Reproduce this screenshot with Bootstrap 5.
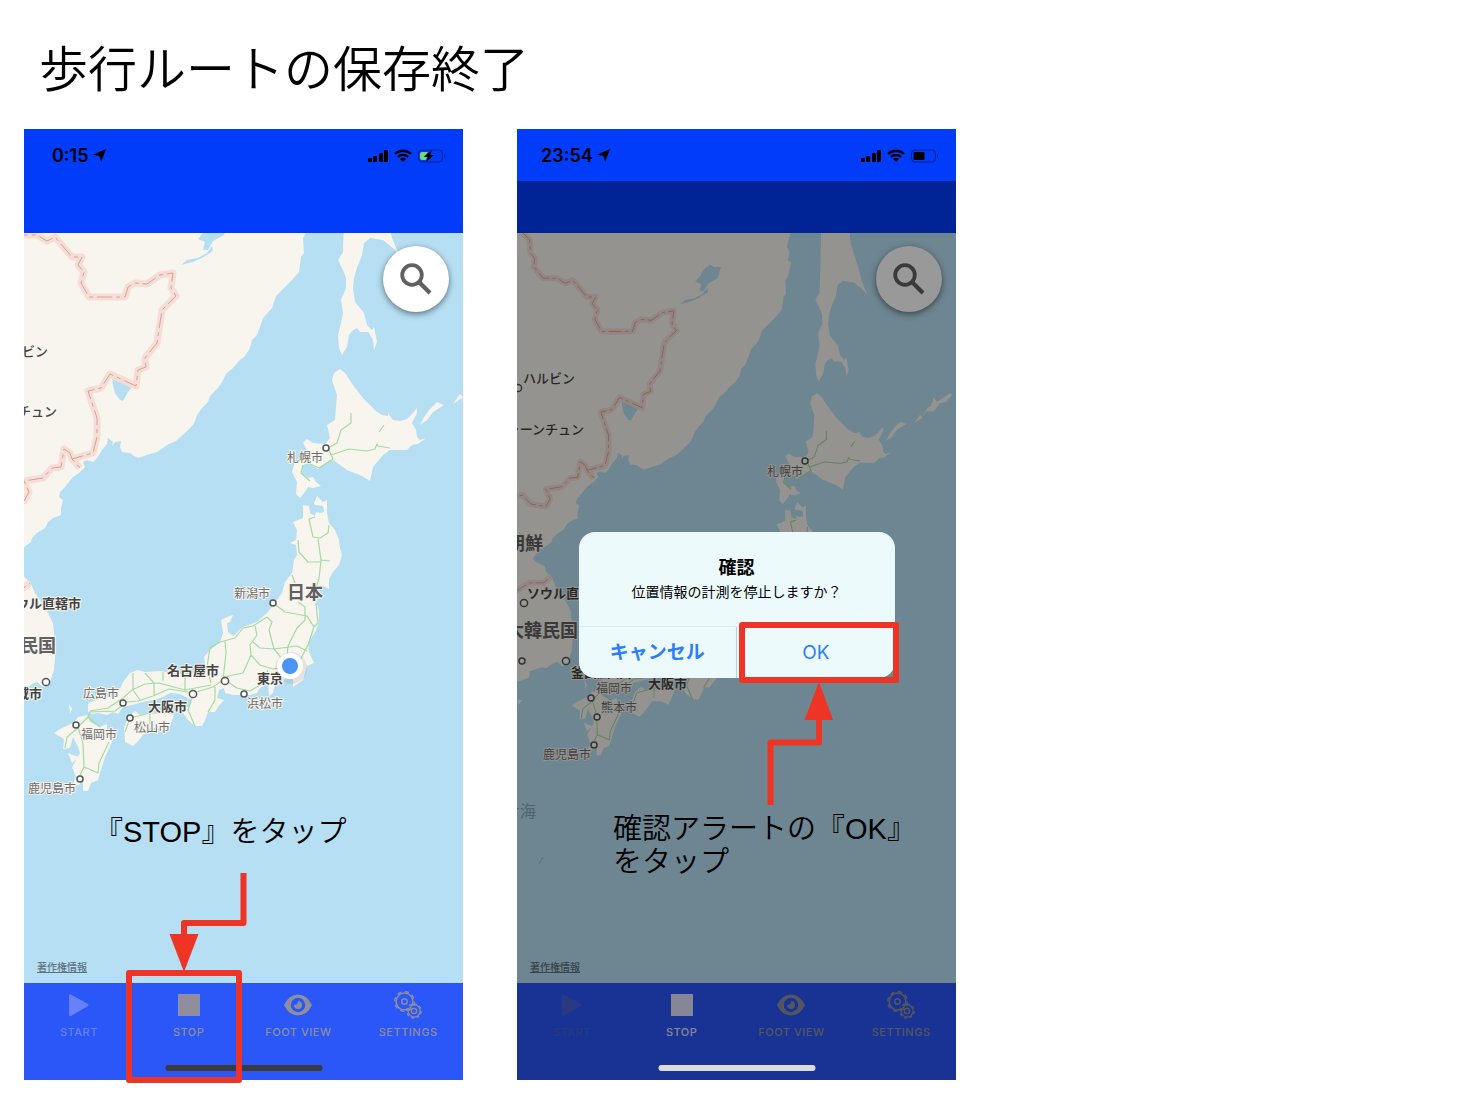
<!DOCTYPE html>
<html lang="ja">
<head>
<meta charset="utf-8">
<meta name="viewport" content="width=device-width, initial-scale=1">
<title>歩行ルートの保存終了</title>
<link href="https://cdn.jsdelivr.net/npm/bootstrap@5.3.0/dist/css/bootstrap.min.css" rel="stylesheet">
<style>
  body { background: #fff; color: #000; font-family: "Liberation Sans", "Noto Sans CJK JP", sans-serif; }
  .slide-title { font-size: 49px; line-height: 56px; font-weight: 350; padding: 42px 15px 31px; }
  .phone-list { gap: 54px; }
  .phone { flex: 0 1 439px; min-width: 0; }
  .status-bar { height: 53px; background: #003cf9; font: 600 18px/20px Inter, sans-serif; }
  .status-bar .arrow-icon { width: 13px; height: 13px; }
  .nav-space { height: 51px; background: #003cf9; }
  .map-svg { width: 100%; height: auto; }
  .map-svg text { font-family: "Noto Sans CJK JP", sans-serif; paint-order: stroke; stroke: #f8f5ef; stroke-width: 2px; stroke-linejoin: round; fill: #444; }
  .map-svg .city { font-size: 12px; fill: #6d6d6d; }
  .map-svg .metro { font-size: 13px; font-weight: 700; }
  .map-svg .nation { font-size: 18px; font-weight: 700; fill: #606060; }
  .map-svg .town { font-size: 13px; font-weight: 500; }
  .map-svg .sea { font-size: 16px; fill: #86a5b5; stroke: none; }
  .search-btn { width: 66px; height: 66px; top: 13px; right: 14px; background: #fff; box-shadow: 0 2px 6px rgba(0,0,0,.5); }
  .legal-link { left: 13px; bottom: 9px; font: 500 10px/14px "Noto Sans CJK JP", sans-serif; color: #5c7480; }
  .tab-bar { height: 97px; background: #2b56f8; padding-top: 8px; }
  .tab-item { font: 500 11px/16px Inter, sans-serif; color: #8e8e9c; background: none; border: 0; gap: 5px; flex: 1 1 0; letter-spacing: .5px; }
  .tab-item svg { width: 30px; height: 28px; }
  .tab-item:disabled { color: #6681fb; }
  .dimmed .tab-item:disabled { color: #4460d8; }
  .dimmed .tab-item.is-active { color: #e0e1fb; }
  .home-bar { width: 157px; height: 6px; background: #3a3a3c; bottom: 9px; z-index: 3; }
  .dimmed .home-bar { background: #dcdcdc; }
  .backdrop-layer { inset: 52px 0 0; background: rgba(0,0,0,.4); z-index: 1; }
  .alert-box { width: 72%; border-radius: 16px; background: #edfafb; z-index: 2; font-family: Inter, "Noto Sans CJK JP", sans-serif; }
  .alert-text { padding: 22px 8px 23px; }
  .alert-text h2 { font-size: 18px; line-height: 27px; font-weight: 700; }
  .alert-text p { font-size: 14px; line-height: 22px; }
  .alert-actions { border-top: 1px solid #dcecee; }
  .alert-actions button { background: none; border: 0; color: #2d7ff9; font-size: 19px; line-height: 51px; padding: 0; flex: 1 1 0; }
  .alert-actions button + button { border-left: 1px solid #bfcccd; }
  .alert-actions .cancel { font-weight: 700; }
  .callout { font-size: 29px; line-height: 33px; font-weight: 350; z-index: 4; white-space: nowrap; }
  .callout-stop { left: 70px; top: 687px; }
  .callout-ok { left: 96px; top: 684px; }
  .marks { z-index: 4; overflow: visible; pointer-events: none; fill: none; stroke: #ee3424; stroke-width: 6; stroke-linejoin: round; }
  .marks polygon { fill: #ee3424; stroke: none; }
</style>
</head>
<body>
<svg width="0" height="0" class="position-absolute" aria-hidden="true">
  <defs>
    <g id="terrain">
      <g fill="#f8f5ef">
        <path d="M-20 170L310 170 309 182 305 198 308 206 306 214 310 217 307 228 306 233 303 238 304 253 301 257 299 272 290 282 282 290 276 296 274 302 272 308 263 318 261 324 257 335 252 340 250 348 245 356 239 361 233 368 226 374 222 382 218 388 210 396 208 402 202 408 197 415 195 421 193 425 185 433 176 441 167 445 157 452 147 455 138 458 134 456 130 453 122 452 120 447 121 441 115 442 112 446 113 442 108 438 107 444 102 450 97 458 93 462 87 460 83 462 85 467 80 472 72 478 65 487 60 492 59 497 63 500 61 508 61 515 53 518 48 522 45 528 37 533 32 538 31 542 17 552 9 561 11 565 23 571 24 577 30 582 35 593 42 603 48 613 53 623 54 633 56 645 55 657 54 670 50 682 43 687 37 682 32 684 24 690 20 688 5 693 5 700 -5 704 -20 708Z"/>
        <path d="M345 170L344 217 343 252 338 260 343 270 346 278 346 288 341 300 343 313 341 323 338 335 339 348 342 355 347 347 349 335 352 331 357 328 360 332 368 332 370 335 373 340 374 350 377 342 374 327 372 330 367 325 364 313 355 302 353 288 354 278 357 268 362 255 364 243 370 238 383 240 395 250 399 255 392 238 388 222 379 194 377 170Z"/>
        <path d="M340 369L345 373 353 385 362 397 370 405 376 411 382 415 388 416 388 413 393 420 400 421 407 419 412 414 417 408 417 413 412 423 416 430 417 437 420 440 426 438 418 444 412 445 407 450 390 450 383 455 373 467 370 481 362 476 347 470 333 460 328 462 318 469 308 463 303 465 302 473 308 478 313 477 316 482 321 486 313 488 308 487 305 492 300 498 296 494 297 482 292 472 295 462 307 457 307 450 303 443 307 439 313 443 325 444 330 438 327 425 335 420 337 395 332 380 334 373Z"/>
        <path d="M303 505L309 506 310 513 315 516 316 512 320 513 324 512 323 506 315 505 314 503 317 496 323 502 327 500 327 513 329 523 335 530 339 540 340 548 342 555 339 565 333 572 329 579 329 589 322 585 317 595 316 603 319 610 319 623 315 632 308 643 309 652 314 663 307 666 303 680 293 687 293 680 288 672 283 683 275 685 273 693 269 696 268 683 260 688 257 693 250 695 233 695 225 693 224 688 219 690 217 698 224 700 218 707 215 712 208 712 205 720 202 726 195 726 188 720 183 713 187 708 192 702 188 698 180 694 170 693 163 697 153 700 143 702 132 705 123 707 118 714 113 712 107 715 98 713 92 714 88 712 88 703 103 698 117 695 123 682 130 673 138 670 145 672 160 671 170 673 187 675 200 672 205 663 204 657 210 650 220 642 223 633 221 620 227 617 233 615 230 622 227 623 228 632 233 636 243 627 257 622 267 613 275 603 282 593 285 582 292 573 294 560 297 555 296 545 290 543 296 540 297 530 293 522 303 518Z"/>
        <path d="M78 717L87 715 90 722 100 727 107 724 107 734 112 742 105 757 100 773 98 780 91 783 88 791 83 791 83 780 79 785 72 785 76 777 72 767 80 753 78 747 73 737 70 748 63 749 64 739 54 733 62 728 73 723ZM68 753L73 755 79 757 72 763ZM69 703L72 709 70 714Z"/>
        <path d="M128 717L135 711 140 715 153 712 168 713 174 715 171 723 167 732 158 728 148 728 143 735 138 741 133 746 125 742 124 728Z"/>
        <path d="M420 425L424 417 430 409 437 402 444 405 433 412 427 420ZM453 404L460 394 463 397 469 386 473 384 476 374 480 379 495 369 498 371 490 379 483 381 476 390 468 390 462 398Z"/>
        <path d="M-9 726L-3 727-8 732Z"/>
      </g>
      <g fill="#b6dff3">
        <path d="M112 377L132 387 128 392 123 401 120 400 115 393 113 385ZM215 219L220 222 228 222 224 235 213 241 208 250 203 250 205 242 198 239 204 232 207 226ZM181 265L187 260 198 258 207 253 212 246 213 251 202 258 193 262Z"/>
      </g>
      <g fill="none" stroke-linejoin="round">
        <path stroke="#f6ded6" stroke-width="7" d="M-3 182L5 190 6 206 11 212 10 222 21 235 37 235 47 241 55 237 72 257 82 257 78 265 84 272 81 283 89 297 125 297 128 287 135 283 147 284 160 275 173 273 171 288 176 296 162 310 157 343 145 358 146 367 138 370 136 386 110 374 101 388 88 391 97 418 97 437 93 453 72 459 80 468M72 459L70 453 64 449 61 467 52 468 43 478 24 481 29 492 24 501 6 498-3 488-12 489M-12 600L5 590 21 590 30 583"/>
        <path stroke="#d5a297" stroke-width="1" stroke-dasharray="15 4 4 4" d="M-3 182L5 190 6 206 11 212 10 222 21 235 37 235 47 241 55 237 72 257 82 257 78 265 84 272 81 283 89 297 125 297 128 287 135 283 147 284 160 275 173 273 171 288 176 296 162 310 157 343 145 358 146 367 138 370 136 386 110 374 101 388 88 391 97 418 97 437 93 453 72 459 80 468M72 459L70 453 64 449 61 467 52 468 43 478 24 481 29 492 24 501 6 498-3 488-12 489M-12 600L5 590 21 590 30 583"/>
        <path stroke="#a3dca0" stroke-width="1.200" d="M351 413V423L341 430 337 443 330 447M331 455L349 449 367 451 375 449 377 444 378 446 390 448M329 450L333 459 319 468 310 464M303 465L301 473 310 481M384 425L379 432M315 517L309 519 313 537 320 538 328 533 329 525M318 539L321 560 319 579 315 590M321 560L330 561M320 562H308L299 552 298 540M292 575L295 583M273 603L285 612 307 616 314 627 308 645 300 660M316 603L318 623 314 627M298 602L305 607V620L297 628 288 646 287 657M267 617L272 622 269 630 274 649 283 660M274 649L297 646 307 651M267 617L253 626 243 628 235 638 220 642 210 648 207 667 211 683M255 626L257 635 250 645 251 655 243 673 223 677M253 642L260 648 274 649M251 655L260 665 273 669 286 667M225 680L237 688 250 691 262 684 268 670M225 640L226 653 223 680 213 687 193 693 187 692 169 689 153 696 138 701 127 702 115 711 90 712 88 717M90 711L108 708 123 698 132 690 145 684 159 683 185 690 211 685M133 673V690L140 700M145 673L154 683V696M163 672V681M185 676V692M215 687V700L208 712M193 694L188 710 195 726M88 717L78 727 83 743 84 767 80 775M84 767L98 773 99 763 109 742M78 728L67 737 65 748M88 717L100 727M130 718L150 713 167 713M150 713V724M130 718L125 732"/>
      </g>
    </g>
    <symbol id="i-location" viewBox="0 0 12 12"><path d="M12 0L7.500 12 6 6.500 0 5.300Z"/></symbol>
    <g id="i-network">
      <rect x="0" y="9" width="4" height="4" rx="1"/><rect x="5" y="7" width="4" height="6" rx="1"/><rect x="11" y="4" width="4" height="9" rx="1"/><rect x="16" y="1" width="4" height="12" rx="1"/>
      <path d="M35 13l-3-3a4 4 0 0 1 6 0z"/>
      <path d="M30 8a7 7 0 0 1 10 0M27 5a11.500 11.500 0 0 1 16 0" fill="none" stroke="#000" stroke-width="2.300"/>
      <rect x="50.500" y="1" width="24" height="12" rx="3.500" fill="none" stroke="#000" stroke-opacity=".45"/><path d="M76 5q2 2 0 4z" opacity=".5"/>
    </g>
    <symbol id="i-search" viewBox="0 0 32 32"><circle cx="12" cy="12" r="9.800" fill="none" stroke="#616161" stroke-width="3.800"/><path d="M19 19L30 30" stroke="#616161" stroke-width="4.200"/></symbol>
    <symbol id="i-play" viewBox="0 0 30 28"><path d="M5 4.500q0-2 2-1L24 13q1 1 0 2L7 25q-2 1-2-1Z" fill="currentColor"/></symbol>
    <symbol id="i-stop" viewBox="0 0 30 28"><rect x="4" y="3" width="22" height="22" fill="currentColor"/></symbol>
    <symbol id="i-eye" viewBox="0 0 30 28"><path fill="currentColor" fill-rule="evenodd" d="M1 14Q6 3.500 15 3.500T29 14Q24 24.500 15 24.500T1 14ZM15 6.800a7.200 7.200 0 1 0 0 14.400a7.200 7.200 0 0 0 0-14.400Z"/><path fill="currentColor" d="M15 10q0 4-4 4a4 4 0 1 0 4-4Z"/></symbol>
    <symbol id="i-gears" viewBox="0 0 30 28"><g fill="none" stroke="currentColor">
      <circle cx="11.500" cy="10.500" r="8.400" stroke-width="1.500"/><circle cx="11.500" cy="10.500" r="9.800" stroke-width="1.500" stroke-dasharray="4.200 3.500"/><circle cx="11.500" cy="10.500" r="2.800" stroke-width="1.400"/>
      <path d="M15.500 18a6 6 0 1 0 5-4" stroke-width="1.300"/><circle cx="21" cy="20" r="7.200" stroke-width="1.300" stroke-dasharray="3 2.650"/><circle cx="21" cy="20" r="2.600" stroke-width="1.300"/></g></symbol>
  </defs>
</svg>

<main class="container-fluid px-4 pb-3">
  <h1 class="slide-title m-0">歩行ルートの保存終了</h1>
  <div class="phone-list d-flex align-items-start">

    <section class="phone position-relative" aria-label="STOP">
      <div class="status-bar d-flex justify-content-between align-items-center px-3">
        <span class="d-flex align-items-center gap-1 ms-2 ps-1">0:15 <svg class="arrow-icon"><use href="#i-location"/></svg></span>
        <svg width="79" height="14" viewBox="0 0 79 14"><use href="#i-network"/><path d="M54 3h6l-4 5h3l-1 3h-4q-2 0-2-2V5q0-2 2-2Z" fill="#6fdc72"/><path d="M64 1l-8 7h4l-2 5 8-7h-4Z"/></svg>
      </div>
      <div class="nav-space"></div>
      <div class="position-relative">
        <svg class="map-svg d-block" viewBox="24 233 439 750">
          <rect x="24" y="233" width="439" height="750" fill="#b6dff3"/>
          <use href="#terrain"/>
          <g fill="#fff" stroke="#555" stroke-width="1.500"><circle cx="326" cy="448" r="3"/><circle cx="273" cy="603" r="3"/><circle cx="225" cy="681" r="3.600"/><circle cx="244" cy="694" r="3"/><circle cx="193" cy="694" r="3.600"/><circle cx="46" cy="682" r="3.600"/><circle cx="123" cy="703" r="3"/><circle cx="130" cy="718" r="3"/><circle cx="76" cy="725" r="3"/><circle cx="80" cy="779" r="3"/></g>
          <g text-anchor="end"><text class="town" x="48" y="356">ビン</text><text class="town" x="57" y="416">チュン</text><text class="metro" x="81" y="608">ウル直轄市</text><text class="nation" x="56" y="652">民国</text><text class="metro" x="42" y="698">域市</text></g>
          <text class="city" x="287" y="462">札幌市</text><text class="city" x="234" y="598">新潟市</text><text class="nation" x="287" y="599">日本</text><text class="metro" x="167" y="675">名古屋市</text><text class="metro" x="257" y="683">東京</text><text class="city" x="83" y="698">広島市</text><text class="metro" x="148" y="711">大阪市</text><text class="city" x="247" y="708">浜松市</text><text class="city" x="81" y="739">福岡市</text><text class="city" x="134" y="732">松山市</text><text class="city" x="28" y="793">鹿児島市</text>
          <circle cx="291" cy="668" r="16" fill="#000" opacity=".07"/><circle cx="290" cy="666" r="13" fill="#fff"/><circle cx="290" cy="666" r="8" fill="#4a94f8"/>
        </svg>
        <button class="search-btn btn rounded-circle position-absolute p-0" type="button" aria-label="検索"><svg width="32" height="32"><use href="#i-search"/></svg></button>
        <a class="legal-link position-absolute" href="#">著作権情報</a>
      </div>
      <nav class="tab-bar d-flex align-items-start">
        <button class="tab-item d-flex flex-column align-items-center p-0" type="button" disabled><svg><use href="#i-play"/></svg>START</button>
        <button class="tab-item is-active d-flex flex-column align-items-center p-0" type="button"><svg><use href="#i-stop"/></svg>STOP</button>
        <button class="tab-item d-flex flex-column align-items-center p-0" type="button"><svg><use href="#i-eye"/></svg>FOOT VIEW</button>
        <button class="tab-item d-flex flex-column align-items-center p-0" type="button"><svg><use href="#i-gears"/></svg>SETTINGS</button>
      </nav>
      <div class="home-bar rounded-pill position-absolute start-50 translate-middle-x"></div>
      <p class="callout callout-stop position-absolute m-0">『STOP』をタップ</p>
      <svg class="marks position-absolute top-0 start-0 w-100 h-100" viewBox="24 129 439 951"><path d="M243.500 873V923H184V936"/><rect x="129" y="973" width="110" height="107"/><polygon points="169.500,934 198.500,934 184,972"/></svg>
    </section>

    <section class="phone dimmed position-relative" aria-label="OK">
      <div class="status-bar d-flex justify-content-between align-items-center px-3">
        <span class="d-flex align-items-center gap-1 ps-2">23:54 <svg class="arrow-icon"><use href="#i-location"/></svg></span>
        <svg width="79" height="14" viewBox="0 0 79 14"><use href="#i-network"/><rect x="52.500" y="3" width="11" height="8" rx="1.500"/></svg>
      </div>
      <div class="nav-space"></div>
      <div class="position-relative">
        <svg class="map-svg d-block" viewBox="517 233 439 750">
          <rect x="517" y="233" width="439" height="750" fill="#b6dff3"/>
          <use href="#terrain" transform="translate(525.300 76.600) scale(.858)"/>
          <path d="M539 864l4-7" stroke="#91c983"/>
          <g fill="#fff" stroke="#555" stroke-width="1.500"><circle cx="805" cy="461" r="3"/><circle cx="518" cy="388" r="3.600"/><circle cx="524" cy="603" r="3.600"/><circle cx="522" cy="661" r="3"/><circle cx="566" cy="661" r="3.600"/><circle cx="591" cy="698" r="3"/><circle cx="597" cy="717" r="3"/><circle cx="594" cy="745" r="3"/></g>
          <text class="town" x="523" y="383">ハルビン</text><text class="metro" x="527" y="598">ソウル直</text><text class="metro" x="571" y="677">釜山広域市</text>
          <g text-anchor="end"><text class="town" x="584" y="434">ャーンチュン</text><text class="nation" x="543" y="550">朝鮮</text><text class="nation" x="578" y="637">大韓民国</text><text class="sea" x="536" y="817">ナ海</text></g>
          <text class="city" x="596" y="693">福岡市</text><text class="metro" x="648" y="688">大阪市</text><text class="city" x="601" y="712">熊本市</text><text class="city" x="543" y="759">鹿児島市</text><text class="city" x="767" y="476">札幌市</text>
        </svg>
        <button class="search-btn btn rounded-circle position-absolute p-0" type="button" aria-label="検索"><svg width="32" height="32"><use href="#i-search"/></svg></button>
        <a class="legal-link position-absolute" href="#">著作権情報</a>
      </div>
      <nav class="tab-bar d-flex align-items-start">
        <button class="tab-item d-flex flex-column align-items-center p-0" type="button" disabled><svg><use href="#i-play"/></svg>START</button>
        <button class="tab-item is-active d-flex flex-column align-items-center p-0" type="button"><svg><use href="#i-stop"/></svg>STOP</button>
        <button class="tab-item d-flex flex-column align-items-center p-0" type="button"><svg><use href="#i-eye"/></svg>FOOT VIEW</button>
        <button class="tab-item d-flex flex-column align-items-center p-0" type="button"><svg><use href="#i-gears"/></svg>SETTINGS</button>
      </nav>
      <div class="backdrop-layer position-absolute"></div>
      <div class="home-bar rounded-pill position-absolute start-50 translate-middle-x"></div>
      <div class="alert-box position-absolute top-50 start-50 translate-middle text-center" role="alertdialog" aria-labelledby="alert-title">
        <div class="alert-text"><h2 class="m-0" id="alert-title">確認</h2><p class="m-0">位置情報の計測を停止しますか？</p></div>
        <div class="alert-actions d-flex"><button class="cancel" type="button">キャンセル</button><button type="button">OK</button></div>
      </div>
      <p class="callout callout-ok position-absolute m-0">確認アラートの『OK』<br>をタップ</p>
      <svg class="marks position-absolute top-0 start-0 w-100 h-100" viewBox="517 129 439 951"><path d="M770.500 805V742.500H819V716"/><rect x="742" y="625" width="154" height="55"/><polygon points="804.500,720 833,720 819,682"/></svg>
    </section>

  </div>
</main>
<script src="https://cdn.jsdelivr.net/npm/bootstrap@5.3.0/dist/js/bootstrap.bundle.min.js"></script>
</body>
</html>
